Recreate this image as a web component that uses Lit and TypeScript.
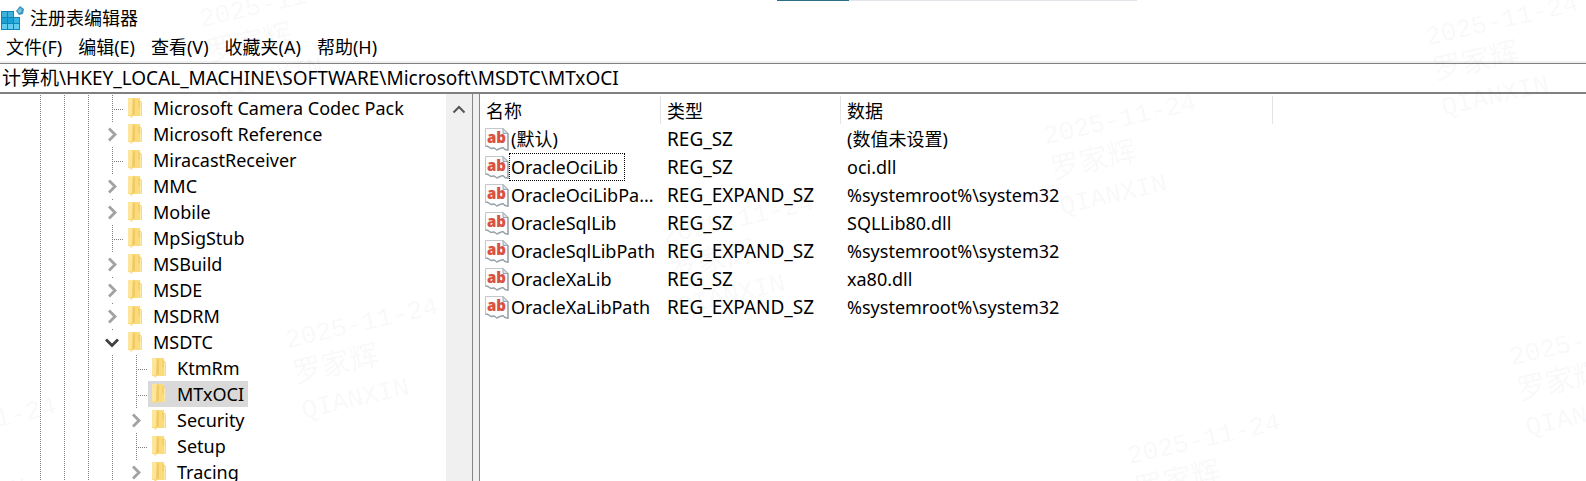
import { LitElement, html, css, svg, nothing } from "lit";
import { customElement, property, state } from "lit/decorators.js";
import { classMap } from "lit/directives/class-map.js";
import { styleMap } from "lit/directives/style-map.js";

type Toggle = "none" | "closed" | "open";
interface TreeNode { name: string; depth: number; toggle: Toggle; }
interface RegValue { name: string; shown: string; type: string; data: string; }

const NODES: TreeNode[] = [
  { name: "Microsoft Camera Codec Pack", depth: 3, toggle: "none" },
  { name: "Microsoft Reference", depth: 3, toggle: "closed" },
  { name: "MiracastReceiver", depth: 3, toggle: "none" },
  { name: "MMC", depth: 3, toggle: "closed" },
  { name: "Mobile", depth: 3, toggle: "closed" },
  { name: "MpSigStub", depth: 3, toggle: "none" },
  { name: "MSBuild", depth: 3, toggle: "closed" },
  { name: "MSDE", depth: 3, toggle: "closed" },
  { name: "MSDRM", depth: 3, toggle: "closed" },
  { name: "MSDTC", depth: 3, toggle: "open" },
  { name: "KtmRm", depth: 4, toggle: "none" },
  { name: "MTxOCI", depth: 4, toggle: "none" },
  { name: "Security", depth: 4, toggle: "closed" },
  { name: "Setup", depth: 4, toggle: "none" },
  { name: "Tracing", depth: 4, toggle: "closed" },
];

const value = (name: string, type: string, data: string, shown = name): RegValue => ({ name, shown, type, data });
const VALUES: RegValue[] = [
  value("(默认)", "REG_SZ", "(数值未设置)"),
  value("OracleOciLib", "REG_SZ", "oci.dll"),
  value("OracleOciLibPath", "REG_EXPAND_SZ", "%systemroot%\\system32", "OracleOciLibPa..."),
  value("OracleSqlLib", "REG_SZ", "SQLLib80.dll"),
  value("OracleSqlLibPath", "REG_EXPAND_SZ", "%systemroot%\\system32"),
  value("OracleXaLib", "REG_SZ", "xa80.dll"),
  value("OracleXaLibPath", "REG_EXPAND_SZ", "%systemroot%\\system32"),
];

const MENUS = ["文件(F)", "编辑(E)", "查看(V)", "收藏夹(A)", "帮助(H)"];

const STAMPS = [[206, -16], [1432, 2], [1050, 101], [668, 201], [292, 305], [-90, 405], [1516, 322], [1134, 421]];

@customElement("reg-tree")
export class RegTree extends LitElement {
  @property() selected = "";

  static styles = css`
    :host { display: block; overflow: hidden; padding-top: 1px; }
    .tree { list-style: none; margin: 0; padding: 0 0 0 28px; }
    .row { display: flex; height: 26px; }
    .guide { flex: none; width: 24px; display: flex; align-items: center; justify-content: center;
      background: repeating-linear-gradient(#808080 0 1px, transparent 1px 2px) 12px 0 / 1px 100% no-repeat; }
    .guide.leaf { background:
      repeating-linear-gradient(#808080 0 1px, transparent 1px 2px) 12px 0 / 1px 100% no-repeat,
      repeating-linear-gradient(90deg, #808080 0 1px, transparent 1px 2px) 12px 14px / 12px 1px no-repeat; }
    .toggle { border: 0; padding: 0; width: 20px; height: 24px; background: #fff; display: grid; place-items: center; }
    .toggle svg { display: block; }
    .key { border: 0; margin: 0; padding: 0 4px; background: none; font: inherit; color: inherit; line-height: 26px;
      display: flex; align-items: center; gap: 11px; white-space: nowrap; text-align: left; }
    .key.on { background: #d9d9d9; }
    .folder { flex: none; display: block; }
  `;

  private chevron(toggle: Toggle) {
    return toggle === "open"
      ? svg`<path d="M4 7.500l6 6 6-6" fill="none" stroke="#404040" stroke-width="2.800"/>`
      : svg`<path d="M7 4.500l6 6-6 6" fill="none" stroke="#a2a2a2" stroke-width="2.800"/>`;
  }

  private folder() {
    return html`<svg class="folder" width="14" height="20" viewBox="0 0 14 20" aria-hidden="true">
      <path d="M0 0h12v3l2 1v14H5l-2 2-1-2H0z" fill="#fbdc7c"/>
      <path d="M0 0h4v17H0z" fill="#fde69c"/>
      <path d="M5 2l2-2v16l-3 2z" fill="#f1ca68"/>
      <path d="M10 2l3 1v8l-3-2z" fill="#f6cf6c"/>
      <path d="M12 4h1v14h-1z" fill="#fdeaa8"/>
    </svg>`;
  }

  private pick(name: string) {
    this.dispatchEvent(new CustomEvent("pick", { detail: name }));
  }

  render() {
    return html`<ul class="tree" role="tree">
      ${NODES.map((n) => html`<li class="row" role="treeitem" aria-selected=${n.name === this.selected ? "true" : "false"}>
        ${Array.from({ length: n.depth }, () => html`<span class="guide"></span>`)}
        <span class=${classMap({ guide: true, leaf: n.toggle === "none" })}>
          ${n.toggle === "none" ? nothing : html`<button class="toggle" aria-label=${(n.toggle === "open" ? "折叠 " : "展开 ") + n.name}>
            <svg width="20" height="20" viewBox="0 0 20 20" aria-hidden="true">${this.chevron(n.toggle)}</svg>
          </button>`}
        </span>
        <button class=${classMap({ key: true, on: n.name === this.selected })} @click=${() => this.pick(n.name)}>
          ${this.folder()}<span>${n.name}</span>
        </button>
      </li>`)}
    </ul>`;
  }
}

@customElement("reg-values")
export class RegValues extends LitElement {
  @property() focused = "";

  static styles = css`
    :host { display: block; overflow: hidden; padding-top: 2px; }
    .grid { border-collapse: separate; border-spacing: 0; table-layout: fixed; width: 100%; }
    .name { width: 181px; }
    .type { width: 180px; }
    .data { width: 432px; }
    .head { height: 29px; padding: 0 0 0 6px; box-sizing: border-box; text-align: left; font-weight: 400; line-height: 28px;
      background: linear-gradient(#e4e4e4, #e4e4e4) right top / 1px 28px no-repeat; }
    .head.rest { background: none; }
    .cell { height: 28px; padding: 0 0 0 6px; line-height: 28px; white-space: nowrap; overflow: hidden; }
    .cell.first { padding-left: 5px; }
    .cell.kind { font-size: 19px; }
    .entry { display: flex; align-items: center; }
    .label { border: 1px solid transparent; padding: 0 6px 0 1px; line-height: 26px; }
    .label.on { border: 1px dotted #000; }
    .icon { flex: none; display: block; }
    .ab { font: 800 15px "Open Sans", "Noto Sans", sans-serif; fill: #d9523f; }
  `;

  private icon() {
    return html`<svg class="icon" width="24" height="24" viewBox="0 0 24 24" aria-hidden="true">
      <path d="M.5 1.500H18l5 5V23l-3-.5-2-2-3 1-3 1.500-3-2-3 .5-3-2-2.500-.5z" fill="#fdfdfd" stroke="#c4c8cb"/>
      <path d="M23 6.500V23l-3-.5-2-2-3 1-3 1.500-3-2-3 .5-3-2-2.500-.5" fill="none" stroke="#9aa4ab" stroke-width="1.500"/>
      <path d="M18 1.500v5h5z" fill="#dfe4e8" stroke="#9aa4ab"/>
      <text class="ab" x="2" y="16">ab</text>
    </svg>`;
  }

  render() {
    return html`<table class="grid">
      <colgroup><col class="name" /><col class="type" /><col class="data" /><col /></colgroup>
      <thead><tr>
        <th class="head" scope="col">名称</th><th class="head" scope="col">类型</th>
        <th class="head" scope="col">数据</th><td class="head rest"></td>
      </tr></thead>
      <tbody>${VALUES.map((v) => html`<tr>
        <td class="cell first" title=${v.name}><div class="entry">${this.icon()}<span class=${classMap({ label: true, on: v.name === this.focused })}>${v.shown}</span></div></td>
        <td class="cell kind">${v.type}</td>
        <td class="cell">${v.data}</td>
        <td></td>
      </tr>`)}</tbody>
    </table>`;
  }
}

@customElement("app-root")
export class AppRoot extends LitElement {
  @state() private selected = "MTxOCI";

  static styles = css`
    :host { display: flex; flex-direction: column; position: relative; height: 100vh; overflow: hidden; background: #fff; color: #000;
      font: 18px/26px "Noto Sans", "Noto Sans CJK SC", sans-serif; }
    .accent { position: absolute; top: 0; left: 49%; width: 360px; height: 1px;
      background: linear-gradient(90deg, #2b6f88 0 72px, #e2e4e9 72px); }
    .title { display: flex; align-items: center; gap: 6px; padding: 2px 0 0 1px; height: 31px; }
    .caption { margin: 0; font: inherit; }
    .menu { display: flex; gap: 16px; padding: 0 6px; height: 28px; border-bottom: 2px solid #f0f0f0; }
    .item { border: 0; padding: 0; background: none; font: inherit; color: inherit; line-height: 28px; }
    .address { display: block; box-sizing: border-box; width: 100%; height: 31px; margin: 0; padding: 0 2px 2px; border: 0;
      border-top: 1px solid #808080; border-bottom: 2px solid #808080; border-radius: 0; background: #fff; font: inherit; font-size: 19px; color: inherit; outline: 0; }
    .panes { flex: 1; min-height: 0; display: grid; grid-template-columns: 446px 26px 8px minmax(0, 1fr); }
    .scroll { background: #f0f0f0; padding-top: 8px; display: flex; justify-content: center; }
    .arrow { border: 0; padding: 0; width: 16px; height: 16px; background: none; }
    .arrow svg { display: block; }
    .split { box-sizing: border-box; background: #f0f0f0; border: solid #868686; border-width: 0 1px; }
    .marks { position: absolute; inset: 0; overflow: hidden; pointer-events: none; }
    .stamp { position: absolute; transform: rotate(-13deg); color: rgba(70, 70, 90, 0.055); white-space: pre;
      font: 26px/36px "Liberation Mono", "Noto Sans CJK SC", monospace; }
    .who { font-size: 29px; }
  `;

  render() {
    return html`
      <header class="title">
        <svg width="23" height="24" viewBox="0 0 23 24" aria-hidden="true">
          <path d="M0 5h13v6h6v13H0z" fill="#0f86b8"/>
          <path d="M1 6h5v5H1zM7 6h5v5H7z" fill="#3fb2dc"/>
          <path d="M1 12h5v5H1zM7 12h5v5H7z" fill="#1ba0d8"/>
          <path d="M13 12h5v5h-5z" fill="#36b4e4"/>
          <path d="M1 18h5v5H1zM7 18h5v5H7zM13 18h5v5h-5z" fill="#63cdf0"/>
          <path d="M19 0l4 3-1 5-4 1-3-4z" fill="#3c96bd"/>
          <path d="M19 2l2 1.500-1 3-2.500.5-1-2z" fill="#7cc3df"/>
        </svg>
        <h1 class="caption">注册表编辑器</h1>
      </header>
      <nav class="menu">${MENUS.map((m) => html`<button class="item">${m}</button>`)}</nav>
      <input class="address" aria-label="地址" .value=${"计算机\\HKEY_LOCAL_MACHINE\\SOFTWARE\\Microsoft\\MSDTC\\MTxOCI"} />
      <main class="panes">
        <reg-tree .selected=${this.selected} @pick=${(e: CustomEvent) => (this.selected = e.detail)}></reg-tree>
        <div class="scroll"><button class="arrow" aria-label="向上滚动">
          <svg width="16" height="16" viewBox="0 0 16 16" aria-hidden="true"><path d="M2.500 10.500L8 5l5.500 5.500" fill="none" stroke="#555" stroke-width="2"/></svg>
        </button></div>
        <div class="split"></div>
        <reg-values focused="OracleOciLib"></reg-values>
      </main>
      <div class="accent"></div>
      <div class="marks" aria-hidden="true">${STAMPS.map(([x, y]) => html`<div class="stamp" style=${styleMap({ left: `${x}px`, top: `${y}px` })}>2025-11-24
<span class="who">罗家辉</span>
QIANXIN</div>`)}</div>
    `;
  }
}
